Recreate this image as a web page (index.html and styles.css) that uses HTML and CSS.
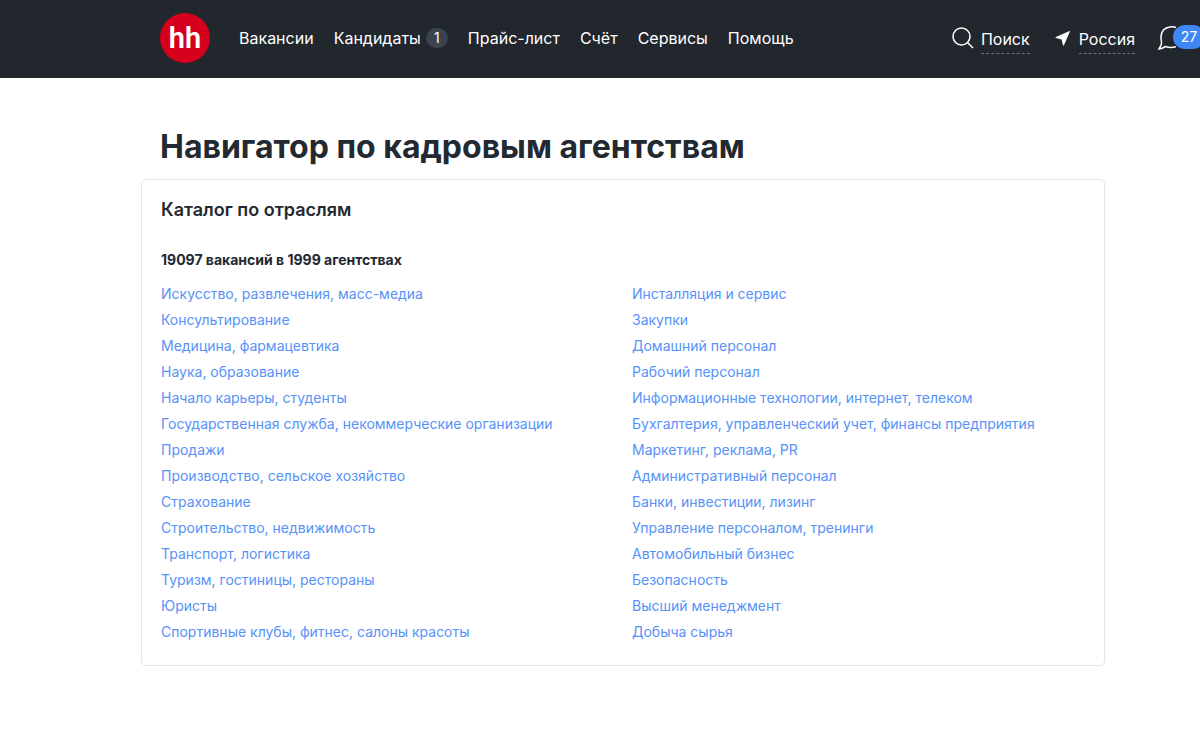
FILE: index.html
```html
<!DOCTYPE html>
<html lang="ru">
<head>
<meta charset="utf-8">
<meta name="viewport" content="width=device-width, initial-scale=1">
<title>Навигатор по кадровым агентствам</title>
<link rel="stylesheet" href="styles.css">
</head>
<body>
<header class="header">
  <a class="logo" href="#">hh</a>
  <nav class="nav">
    <a href="#">Вакансии</a>
    <a href="#">Кандидаты<span class="count">1</span></a>
    <a href="#">Прайс-лист</a>
    <a href="#">Счёт</a>
    <a href="#">Сервисы</a>
    <a href="#">Помощь</a>
  </nav>
  <div class="tools">
    <a class="tool" href="#">
      <svg class="icon-search" viewBox="0 0 24 24" aria-hidden="true"><circle cx="10.500" cy="10.500" r="8.500"/><path d="M16.500 16.500l5.500 5.500"/></svg>
      <span class="tool-label">Поиск</span>
    </a>
    <button class="tool" type="button">
      <svg class="icon-place" viewBox="0 0 16 16" aria-hidden="true"><path d="M15.2.8L.8 7.1c-.5.3-.4.9.2 1l5.6 1.3 1.300 5.600c.2.6.8.7 1.100.2z"/></svg>
      <span class="tool-label">Россия</span>
    </button>
    <button class="chat" type="button" aria-label="Сообщения">
      <svg class="icon-chat" viewBox="0 0 24 24" aria-hidden="true"><path d="M18 1.500C16.500 .9 14 .7 12 .9C6.500 1.400 3 5.500 3 11C3 13.800 3.400 15.500 3.600 16.800C3.500 19 2.300 21 1 23C3.200 22.800 5.500 21.800 7.500 20.500C9.500 21.300 14 21.800 18 20.800"/></svg>
      <span class="unread">27</span>
    </button>
  </div>
</header>
<main class="page">
  <h1 class="title">Навигатор по кадровым агентствам</h1>
  <section class="catalog">
    <h2 class="catalog-title">Каталог по отраслям</h2>
    <p class="summary">19097 вакансий в 1999 агентствах</p>
    <div class="columns">
      <ul class="list">
        <li><a href="#">Искусство, развлечения, масс-медиа</a></li>
        <li><a href="#">Консультирование</a></li>
        <li><a href="#">Медицина, фармацевтика</a></li>
        <li><a href="#">Наука, образование</a></li>
        <li><a href="#">Начало карьеры, студенты</a></li>
        <li><a href="#">Государственная служба, некоммерческие организации</a></li>
        <li><a href="#">Продажи</a></li>
        <li><a href="#">Производство, сельское хозяйство</a></li>
        <li><a href="#">Страхование</a></li>
        <li><a href="#">Строительство, недвижимость</a></li>
        <li><a href="#">Транспорт, логистика</a></li>
        <li><a href="#">Туризм, гостиницы, рестораны</a></li>
        <li><a href="#">Юристы</a></li>
        <li><a href="#">Спортивные клубы, фитнес, салоны красоты</a></li>
      </ul>
      <ul class="list">
        <li><a href="#">Инсталляция и сервис</a></li>
        <li><a href="#">Закупки</a></li>
        <li><a href="#">Домашний персонал</a></li>
        <li><a href="#">Рабочий персонал</a></li>
        <li><a href="#">Информационные технологии, интернет, телеком</a></li>
        <li><a href="#">Бухгалтерия, управленческий учет, финансы предприятия</a></li>
        <li><a href="#">Маркетинг, реклама, PR</a></li>
        <li><a href="#">Административный персонал</a></li>
        <li><a href="#">Банки, инвестиции, лизинг</a></li>
        <li><a href="#">Управление персоналом, тренинги</a></li>
        <li><a href="#">Автомобильный бизнес</a></li>
        <li><a href="#">Безопасность</a></li>
        <li><a href="#">Высший менеджмент</a></li>
        <li><a href="#">Добыча сырья</a></li>
      </ul>
    </div>
  </section>
</main>
</body>
</html>
```

FILE: styles.css
```css
* { box-sizing: border-box; }
body {
  margin: 0;
  background: #fff;
  color: #232930;
  font: 14px/20px Inter, "Noto Sans", sans-serif;
}
a { color: inherit; text-decoration: none; }
button { padding: 0; border: 0; background: none; color: inherit; font: inherit; cursor: pointer; }

.header {
  display: flex;
  align-items: center;
  padding: 13px 0 15px 160px;
  overflow: hidden;
  background: #22262d;
  color: #fff;
  font-size: 16px;
  line-height: 24px;
}
.logo {
  display: flex;
  align-items: center;
  justify-content: center;
  width: 50px;
  height: 50px;
  margin-right: 29px;
  border-radius: 50%;
  background: #d6001c;
  font-family: Roboto, Inter, sans-serif;
  font-size: 29px;
  font-weight: 600;
}
.nav { display: flex; gap: 20px; white-space: nowrap; }
.nav a { display: flex; align-items: center; }
.count {
  min-width: 22px;
  margin-left: 5px;
  border-radius: 10px;
  background: #3b434e;
  font-size: 14px;
  line-height: 20px;
  text-align: center;
}
.tools { display: flex; align-items: center; margin-left: auto; }
.tool { display: flex; align-items: center; margin-right: 23px; }
.tool-label { padding: 4px 0 2px; border-bottom: 1px dashed #6b7078; }
.icon-search {
  width: 24px;
  height: 24px;
  margin-right: 6px;
  fill: none;
  stroke: #fff;
  stroke-width: 1.5;
}
.icon-place { width: 16px; height: 16px; margin: 0 8px 0 2px; fill: #fff; }
.chat { position: relative; width: 42px; height: 24px; }
.icon-chat { display: block; width: 24px; height: 24px; fill: none; stroke: #fff; stroke-width: 1.5; }
.unread {
  position: absolute;
  top: -1px;
  left: 15px;
  width: 32px;
  border-radius: 12px;
  background: #3f87f5;
  font-size: 14px;
  line-height: 24px;
  text-align: center;
}

.page { max-width: 1105px; padding: 45px 0 64px 141px; }
.title { margin: 0 0 8px 19px; font-size: 32px; line-height: 48px; font-weight: 700; }
.catalog { padding: 18px 19px 20px; border: 1px solid #e2e6ec; border-radius: 5px; }
.catalog-title { margin: 0 0 28px; font-size: 18px; line-height: 24px; font-weight: 600; }
.summary { margin: 0 0 11px; font-weight: 700; }
.columns { display: grid; grid-template-columns: 1fr 1fr; gap: 18px; }
.list { margin: 0; padding: 0; list-style: none; }
.list li { line-height: 26px; color: #5792f7; }
```
